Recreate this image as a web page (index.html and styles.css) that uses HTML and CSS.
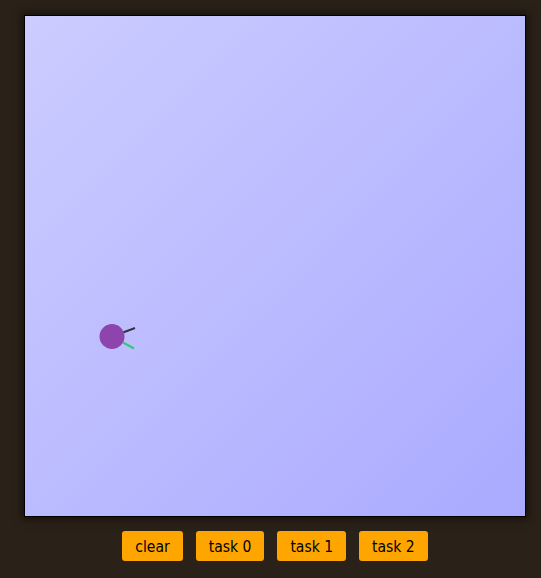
FILE: index.html
```html
<!DOCTYPE html>
<html>
<head>
<meta charset="utf-8">
<link rel="stylesheet" href="styles.css">
</head>
<body>
<div class="wrap">
  <div class="stage">
    <svg class="agent" width="500" height="500" viewBox="0 0 500 500">
      <line x1="98" y1="316.5" x2="110" y2="312" stroke="#333344" stroke-width="2"/>
      <line x1="98" y1="326.5" x2="109" y2="332.5" stroke="#2ecc71" stroke-width="2"/>
      <circle cx="87" cy="320.5" r="12.5" fill="#8e44ad"/>
    </svg>
  </div>
  <div class="controls">
    <button class="btn">clear</button>
    <button class="btn">task 0</button>
    <button class="btn">task 1</button>
    <button class="btn">task 2</button>
  </div>
</div>
</body>
</html>
```
FILE: styles.css
```css
html, body {
  margin: 0;
  padding: 0;
  background: #2a2118;
  height: 100%;
}
.wrap {
  padding: 15px 0 0 24px;
  width: 502px;
}
.stage {
  width: 500px;
  height: 500px;
  border: 1px solid #000;
  background: linear-gradient(135deg, #ccccff 0%, #aaaaff 100%);
  box-shadow: 0 0 8px 2px rgba(0,0,0,0.5);
}
.agent {
  display: block;
}
.controls {
  display: flex;
  justify-content: center;
  gap: 13px;
  margin-top: 14px;
}
.btn {
  font-family: "DejaVu Sans Condensed", "DejaVu Sans", sans-serif;
  font-stretch: condensed;
  font-size: 15.5px;
  color: #000;
  background: #ffa500;
  border: none;
  border-radius: 3px;
  height: 30px;
  padding: 2px 13px 0;
}
```
